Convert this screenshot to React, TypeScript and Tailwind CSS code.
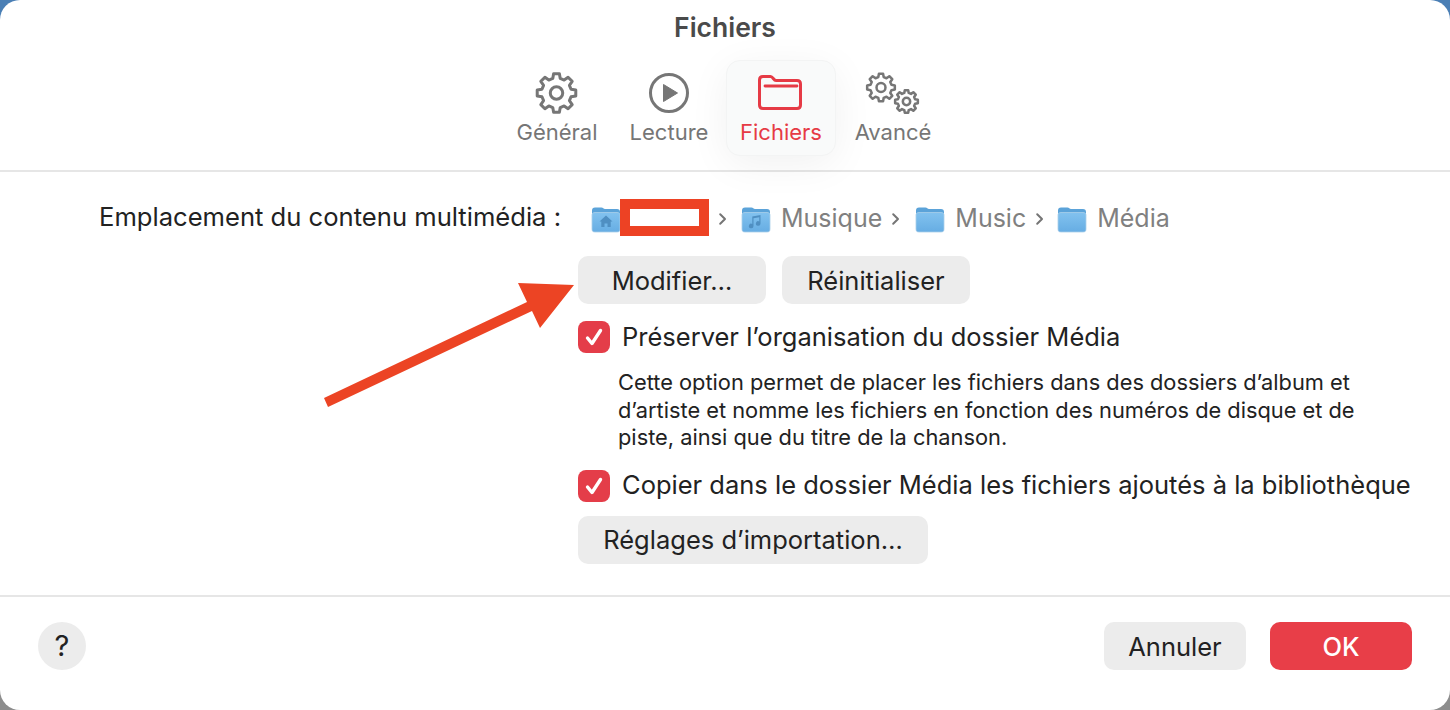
import { ReactNode } from 'react'

const font = { fontFamily: 'Inter, "Liberation Sans", sans-serif' }

function Gear({ cx, cy, r, sw }: { cx: number; cy: number; r: number; sw: number }) {
  // contour d'engrenage à 8 dents
  const pts: string[] = []
  const teeth = 8
  for (let i = 0; i < teeth; i++) {
    const a = (i / teeth) * Math.PI * 2 - Math.PI / 2
    const d = (Math.PI * 2) / teeth
    const p = (ang: number, rad: number) =>
      `${(cx + Math.cos(ang) * rad).toFixed(2)} ${(cy + Math.sin(ang) * rad).toFixed(2)}`
    pts.push(`${i === 0 ? 'M' : 'L'}${p(a - d * 0.19, r)}`)
    pts.push(`L${p(a + d * 0.19, r)}`)
    pts.push(`L${p(a + d * 0.32, r * 0.77)}`)
    pts.push(`L${p(a + d * 0.68, r * 0.77)}`)
  }
  return (
    <g fill="none" stroke="currentColor" strokeWidth={sw} strokeLinejoin="round">
      <path d={pts.join(' ') + ' Z'} />
      <circle cx={cx} cy={cy} r={r * 0.32} />
    </g>
  )
}

function Tab({ label, active, icon }: { label: string; active?: boolean; icon: ReactNode }) {
  return (
    <div
      className={`w-[110px] h-[96px] flex flex-col items-center rounded-[14px] border ${
        active
          ? 'text-[#e63a45] bg-[#f9fafa] border-[#f3f4f4] shadow-[0_8px_40px_rgba(0,0,0,0.06)]'
          : 'text-[#767676] border-transparent'
      }`}
    >
      <div className="h-[59px] w-full flex items-center justify-center pt-[4px]">{icon}</div>
      <span className="text-[22px] leading-[24px]">{label}</span>
    </div>
  )
}

function Folder({ kind }: { kind: 'home' | 'music' | 'plain' }) {
  return (
    <svg width="30" height="27" viewBox="0 0 30 27" className="shrink-0">
      <defs>
        <linearGradient id="folderBody" x1="0" y1="0" x2="0" y2="1">
          <stop offset="0" stopColor="#82c2ef" />
          <stop offset="1" stopColor="#66ade3" />
        </linearGradient>
      </defs>
      <path d="M1 4.500C1 2.500 2 1.500 4 1.500h6.500c1.600 0 2 1.500 3.500 1.500H26c2 0 3 1 3 3V23c0 2-1 3-3 3H4c-2 0-3-1-3-3Z" fill="#5ba3d9" />
      <path
        d="M1 9c0-1.500 1-2.500 3-2.500h22c2 0 3 1 3 2.500v14c0 2-1 3-3 3H4c-2 0-3-1-3-3Z"
        fill="url(#folderBody)"
        stroke="#a9cfea"
        strokeWidth="0.800"
      />
      {kind === 'home' && <path d="M15 9.500 8.500 15.500h1.800v5.500h3.200v-3.500h3V21h3.200v-5.500h1.800Z" fill="#4f8fc2" />}
      {kind === 'music' && (
        <path d="M12.500 20a2.300 2.300 0 1 1-1.200-2v-7.500l8.200-1.500v8.500a2.300 2.300 0 1 1-1.200-2v-4.300l-5.800 1.100Z" fill="#4f8fc2" />
      )}
    </svg>
  )
}

function Chevron() {
  return (
    <svg width="9" height="14" viewBox="0 0 9 14" className="shrink-0">
      <path d="M2.200 2.200 7 7 2.200 11.800" fill="none" stroke="#757575" strokeWidth="2" strokeLinecap="round" strokeLinejoin="round" />
    </svg>
  )
}

function GrayButton({ children, className }: { children: ReactNode; className: string }) {
  return (
    <button className={`h-[48px] pt-[2px] rounded-[10px] bg-[#ececec] text-[#222] text-[25.5px] ${className}`}>
      {children}
    </button>
  )
}

function Check({ label }: { label: string }) {
  return (
    <div className="flex items-center gap-[12px] h-[32px]">
      <span className="w-[32px] h-[32px] rounded-[8px] bg-[#e43d49] flex items-center justify-center">
        <svg width="24" height="24" viewBox="0 0 24 24">
          <path d="M5.500 13 10 18.500 18.500 5.500" fill="none" stroke="#fff" strokeWidth="3.400" strokeLinecap="round" strokeLinejoin="round" />
        </svg>
      </span>
      <span className="text-[25.5px] text-[#222] whitespace-nowrap">{label}</span>
    </div>
  )
}

export default function App() {
  return (
    <div className="w-[1450px] h-[710px] bg-[linear-gradient(#4a7fb5_50%,#8d8d8d_50%)] overflow-hidden relative" style={font}>
      <div className="w-full h-full bg-white rounded-[20px] flex flex-col">
        <h1 className="text-center text-[26.5px] font-semibold text-[#4a4a4a] leading-[30px] pt-[12px]">Fichiers</h1>

        <div className="flex justify-center pt-[18px] h-[130px] border-b-2 border-[#e6e6e6]">
          <Tab
            label="Général"
            icon={
              <svg width="44" height="44" viewBox="0 0 44 44">
                <Gear cx={21.500} cy={22} r={19.500} sw={3} />
              </svg>
            }
          />
          <div className="w-[2px]" />
          <Tab
            label="Lecture"
            icon={
              <svg width="44" height="44" viewBox="0 0 44 44">
                <circle cx="22" cy="22" r="18.500" fill="none" stroke="currentColor" strokeWidth="3" />
                <path d="M16.500 13.500v17L30.500 22Z" fill="currentColor" stroke="currentColor" strokeLinejoin="round" />
              </svg>
            }
          />
          <div className="w-[2px]" />
          <Tab
            label="Fichiers"
            active
            icon={
              <svg width="48" height="40" viewBox="0 0 48 40">
                <path
                  d="M2.500 7c0-2.200 1.300-3.500 3.500-3.500h7.500c2.500 0 3 4 5.500 4H40c2.200 0 3.500 1.300 3.500 3.500v21c0 2.200-1.300 3.500-3.500 3.500H6c-2.200 0-3.500-1.300-3.500-3.500Z"
                  fill="none"
                  stroke="currentColor"
                  strokeWidth="3"
                />
                <path d="M8 13h32" stroke="currentColor" strokeWidth="2.800" strokeLinecap="round" />
              </svg>
            }
          />
          <div className="w-[2px]" />
          <Tab
            label="Avancé"
            icon={
              <svg width="60" height="46" viewBox="0 0 60 46" className="text-[#767676]">
                <Gear cx={18} cy={17.500} r={14} sw={2.500} />
                <Gear cx={43.500} cy={31.500} r={11.500} sw={2.500} />
              </svg>
            }
          />
        </div>

        <div className="flex-1 flex pl-[99px] pt-[28px]">
          <div className="w-[479px] shrink-0 text-[25.6px] text-[#222] leading-[32px] whitespace-nowrap pt-[1px]">
            Emplacement du contenu multimédia :
          </div>
          <div className="flex flex-col">
            <div className="h-[36px] mt-[1px] flex items-center text-[25px] text-[#808080] pl-[13px] relative whitespace-nowrap">
              <Folder kind="home" />
              <span className="w-[97px]" />
              <Chevron />
              <span className="w-[14px]" />
              <Folder kind="music" />
              <span className="ml-[10px]">Musique</span>
              <span className="w-[9px]" />
              <Chevron />
              <span className="w-[15px]" />
              <Folder kind="plain" />
              <span className="ml-[10px]">Music</span>
              <span className="w-[9px]" />
              <Chevron />
              <span className="w-[13px]" />
              <Folder kind="plain" />
              <span className="ml-[10px]">Média</span>
              {/* masque rouge de l'annotation */}
              <span className="absolute left-[42px] top-[-2px] w-[89px] h-[37px] bg-white border-[10px] border-[#ed4224]" />
            </div>

            <div className="flex gap-[16px] mt-[19px]">
              <GrayButton className="w-[188px]">Modifier…</GrayButton>
              <GrayButton className="w-[188px]">Réinitialiser</GrayButton>
            </div>

            <div className="mt-[17px]">
              <Check label="Préserver l’organisation du dossier Média" />
            </div>
            <p className="ml-[40px] mt-[16px] w-[770px] text-[21.8px] leading-[27.5px] text-[#222]">
              Cette option permet de placer les fichiers dans des dossiers d’album et d’artiste et nomme les fichiers en fonction des numéros de disque et de piste, ainsi que du titre de la chanson.
            </p>
            <div className="mt-[18px]">
              <Check label="Copier dans le dossier Média les fichiers ajoutés à la bibliothèque" />
            </div>
            <GrayButton className="w-[350px] mt-[14px]">Réglages d’importation…</GrayButton>
          </div>
        </div>

        <div className="h-[115px] border-t-2 border-[#e6e6e6] flex items-center justify-between pl-[38px] pr-[38px] pb-[15px]">
          <button className="w-[48px] h-[48px] rounded-full bg-[#ececec] text-[#222] text-[29px]">?</button>
          <div className="flex gap-[24px]">
            <GrayButton className="w-[142px]">Annuler</GrayButton>
            <button className="w-[142px] h-[48px] pt-[2px] rounded-[10px] bg-[#e83e48] text-white text-[25.5px] font-medium">OK</button>
          </div>
        </div>
      </div>

      {/* flèche d'annotation */}
      <svg className="absolute left-0 top-0 pointer-events-none" width="1450" height="710">
        <path d="M324 398 527 302 518 283 574 285 540 328 532 311 328 407Z" fill="#ec4424" />
      </svg>
    </div>
  )
}
